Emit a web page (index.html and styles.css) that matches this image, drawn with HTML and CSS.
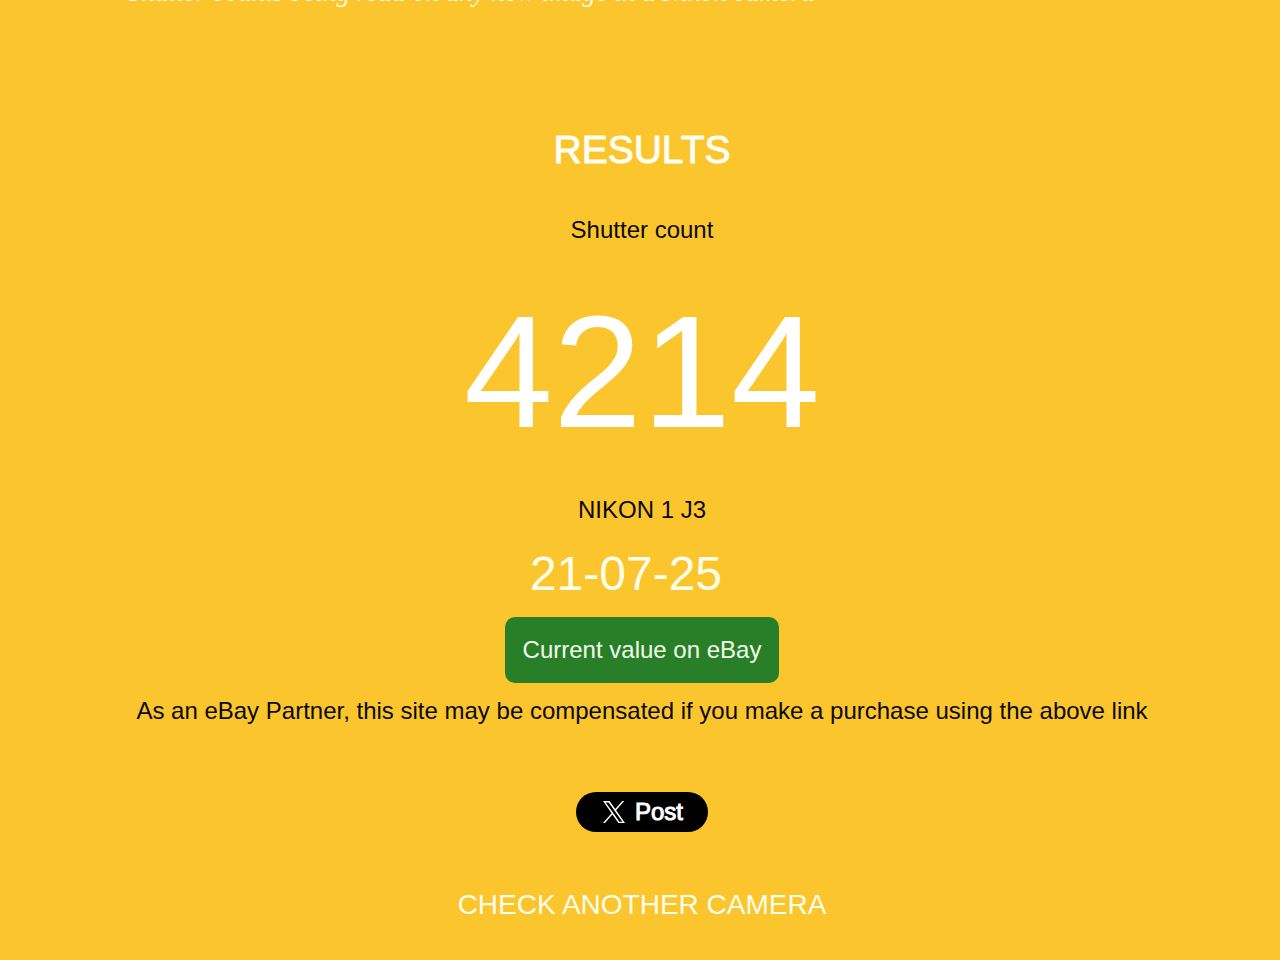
FILE: index.html
```html
<!DOCTYPE html>
<html lang="en">
<head>
<meta charset="utf-8">
<meta name="viewport" content="width=device-width, initial-scale=1">
<title>Shutter count results</title>
<link rel="stylesheet" href="styles.css">
</head>
<body>
<header class="intro"><p class="tagline">Shutter counts being read on any new image in a Nikon camera</p></header>
<main class="results">
<h1 class="title">RESULTS</h1>
<p class="label">Shutter count</p>
<p class="count">4214</p>
<p class="model">NIKON 1 J3</p>
<p class="date">21-07-25</p>
<a class="value" href="#">Current value on eBay</a>
<p class="notice">As an eBay Partner, this site may be compensated if you make a purchase using the above link</p>
<button class="post" type="button">
<svg class="logo" viewBox="0 0 24 24" aria-hidden="true"><path fill="currentColor" d="M14.095 10.316 22.286 1h-1.94L13.23 9.088 7.551 1H1l8.59 12.231L1 23h1.94l7.51-8.543L16.45 23H23l-8.905-12.684Zm-2.658 3.022-.872-1.218L3.64 2.432h2.98l5.59 7.821.869 1.219 7.265 10.166h-2.982l-5.926-8.3Z"/></svg>
<span>Post</span>
</button>
<a class="again" href="#">CHECK ANOTHER CAMERA</a>
</main>
</body>
</html>
```
FILE: styles.css
```css
* { box-sizing: border-box; }
body {
  margin: 0;
  background: #fbc52d;
  color: #0c0a04;
  font: 24px/32px "Liberation Sans", Arial, sans-serif;
}
p, h1 { margin: 0; }
a { text-decoration: none; }
.intro {
  height: 8px;
  padding: 0 128px;
  overflow: hidden;
  display: flex;
  align-items: flex-end;
  color: #fffbe6;
}
.tagline {
  font: italic 27px/32px "Liberation Serif", serif;
  white-space: nowrap;
}
.results {
  display: flex;
  flex-direction: column;
  align-items: center;
  padding: 118px 0 32px 4px;
  text-align: center;
}
.title {
  color: #fffef2;
  font-size: 39px;
  line-height: 48px;
  font-weight: 400;
  -webkit-text-stroke: 1px currentColor;
}
.label { margin-top: 40px; }
.count {
  margin-top: 30px;
  color: #fff;
  font-size: 160px;
  line-height: 192px;
}
.model { margin-top: 26px; }
.date {
  margin: 20px 32px 15px 0;
  color: #fffdec;
  font-size: 48px;
  line-height: 56px;
}
.value {
  padding: 17px 18px;
  border-radius: 10px;
  background: #287f28;
  color: #f2fdec;
}
.notice { margin-top: 12px; }
.post {
  display: flex;
  align-items: center;
  gap: 9px;
  height: 40px;
  margin-top: 65px;
  padding: 0 25px 0 26px;
  border: 0;
  border-radius: 20px;
  background: #000;
  color: #fff;
  font: inherit;
}
.post span { -webkit-text-stroke: 1px currentColor; }
.logo { width: 24px; height: 24px; }
.again {
  margin-top: 57px;
  color: #fffdec;
  font-size: 28px;
}
```
